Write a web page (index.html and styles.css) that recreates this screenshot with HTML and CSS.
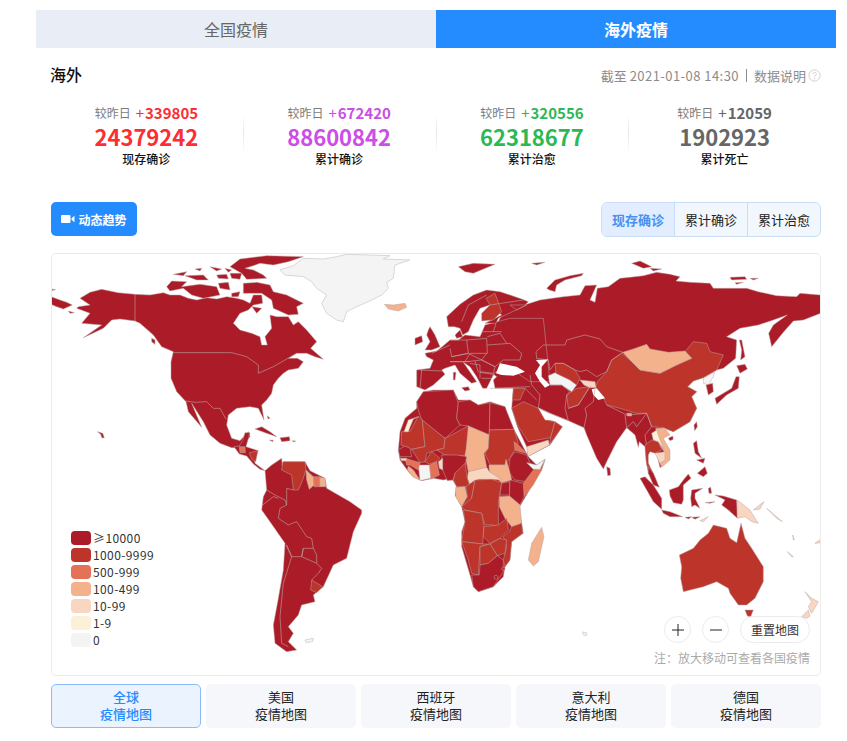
FILE: index.html
```html
<!DOCTYPE html>
<html lang="zh">
<head>
<meta charset="utf-8">
<title>海外疫情</title>
<link rel="stylesheet" href="styles.css">
</head>
<body>
<main class="page">
  <nav class="tabs">
    <div class="tab">全国疫情</div>
    <div class="tab tab-on">海外疫情</div>
  </nav>
  <section class="body">
    <header class="head">
      <h1 class="title">海外</h1>
      <div class="meta"><span class="when">截至 <span class="date">2021-01-08 14:30</span></span><span class="sep"></span><span>数据说明</span><svg class="help" viewBox="0 0 14 14" width="13" height="13"><circle cx="7" cy="7" r="6" fill="none" stroke="#ccc"/><path d="M5.3 5.5a1.8 1.8 0 1 1 2.6 1.6c-.6.3-.9.7-.9 1.4" fill="none" stroke="#ccc"/><circle cx="7" cy="10.3" r=".7" fill="#ccc"/></svg></div>
    </header>
    <div class="stats">
      <div class="stat red"><div class="delta"><span class="cmp">较昨日</span><b><i>+</i>339805</b></div><div class="num">24379242</div><div class="lab">现存确诊</div></div>
      <div class="stat purple"><div class="delta"><span class="cmp">较昨日</span><b><i>+</i>672420</b></div><div class="num">88600842</div><div class="lab">累计确诊</div></div>
      <div class="stat green"><div class="delta"><span class="cmp">较昨日</span><b><i>+</i>320556</b></div><div class="num">62318677</div><div class="lab">累计治愈</div></div>
      <div class="stat grey"><div class="delta"><span class="cmp">较昨日</span><b><i>+</i>12059</b></div><div class="num">1902923</div><div class="lab">累计死亡</div></div>
    </div>
    <div class="bar">
      <button class="trend"><svg viewBox="0 0 14 10" width="14" height="10"><rect x="0" y="1" width="9.5" height="8" rx="1" fill="#fff"/><path d="M10.5 4.2 13.5 1.8v6.4L10.5 5.8z" fill="#fff"/></svg>动态趋势</button>
      <div class="seg"><span class="seg-i seg-on">现存确诊</span><span class="seg-i">累计确诊</span><span class="seg-i">累计治愈</span></div>
    </div>
    <div class="card">
      <svg class="map" viewBox="52 254 768 421" width="768" height="421">
        <!-- north america -->
        <g transform="translate(40 245) scale(.33333)">
          <polygon class="c7 gl" points="720,75 760,62 790,40 850,42 890,35 920,28 985,30 1050,32 1030,42 1110,45 1065,60 1060,100 1040,112 1045,130 1025,150 985,170 950,185 920,200 910,230 890,225 860,205 845,175 860,150 830,130 815,110 790,95 735,90"/>
          <polygon class="c4" points="1033,178 1060,180 1095,175 1100,187 1075,198 1045,192"/>
          <polygon class="c1" points="33,155 60,165 80,172 97,180 70,192 50,185 33,178"/>
          <polygon class="c1" points="33,132 47,134 33,137"/>
          <polygon class="c1" points="85,198 103,203 90,205"/>
          <polygon class="c1" points="115,185 150,180 120,160 150,142 185,133 235,143 285,148 330,150 370,143 390,150 420,150 445,160 470,165 500,158 530,162 560,155 590,160 610,165 630,175 640,150 665,150 668,175 640,180 625,195 600,205 580,235 600,255 635,265 660,275 665,300 682,300 675,275 695,250 690,210 710,215 745,215 760,240 775,230 800,255 830,290 812,310 850,343 825,335 800,325 770,325 745,340 772,340 790,350 775,370 745,375 730,385 715,400 700,420 695,445 680,465 665,480 672,525 655,490 630,485 590,490 565,510 560,540 575,580 600,587 625,560 630,575 610,600 585,608 575,608 540,595 510,570 490,530 455,475 485,547 445,500 438,470 410,440 393,400 393,350 400,320 365,305 340,270 300,235 285,228 240,222 215,225 190,250 130,278 185,240 125,235 150,205 110,190"/>
          <polygon class="c1" points="600,42 680,32 790,35 745,50 700,60 660,55 640,62 615,70 640,75 670,90 680,100 620,103 605,85 570,65"/>
          <polygon class="c1" points="400,88 440,80 430,92"/>
          <polygon class="c1" points="435,92 490,90 505,105 470,105"/>
          <polygon class="c1" points="465,72 485,70 480,78"/>
          <polygon class="c1" points="510,65 545,72 530,78"/>
          <polygon class="c1" points="555,70 575,75 565,82"/>
          <polygon class="c1" points="530,90 560,88 565,102 535,100"/>
          <polygon class="c1" points="570,85 605,85 600,103 575,100"/>
          <polygon class="c1" points="380,125 395,108 440,110 425,125 480,118 530,125 540,150 490,160 455,150 430,130 390,138"/>
          <polygon class="c1" points="535,115 565,112 570,135 540,130"/>
          <polygon class="c1" points="575,145 600,140 595,155 575,155"/>
          <polygon class="c1" points="610,115 650,112 690,120 700,140 740,150 790,175 770,185 775,208 745,210 700,190 695,165 665,145 610,145"/>
          <polygon class="c1" points="636,185 665,190 650,205"/>
          <polygon class="c1" points="335,280 345,285 345,298 335,290"/>
          <polygon class="c1" points="172,560 188,565 193,578 186,579 182,568"/>
          <polygon class="c1" points="645,552 665,545 690,560 710,575 680,565"/>
          <polygon class="c1" points="720,578 748,575 750,587 725,590"/>
          <polygon class="c1" points="688,585 700,586 698,590"/>
          <polygon class="c1" points="757,587 767,588 760,591"/>
          <polygon class="c1" points="682,512 690,520 684,522"/>
          <path class="bd" d="M285 148V228M400 323H575L620 335 655 360V385L700 365 735 345 770 325M438 468 465 472 500 470 520 490 540 490 558 522"/>
        </g>
        <!-- central and south america -->
        <g transform="translate(210 430) scale(.33333)">
          <polygon class="c1" points="72,50 88,48 98,32 105,8 120,8 108,50 145,62 132,80 135,100 155,115 165,122 150,118 130,102 110,78 88,72"/>
          <polygon class="c3" points="88,50 105,50 106,68 90,68"/>
          <polygon class="c2" points="118,68 144,62 137,95 125,88"/>
          <polygon class="c1" points="165,122 185,105 215,85 217,108 222,95 285,95 300,122 345,145 350,175 385,195 420,215 455,240 455,250 430,305 410,385 370,405 340,470 310,495 315,515 275,525 265,555 235,590 250,610 235,635 260,660 230,665 195,640 190,585 205,505 220,420 225,340 180,275 155,240 160,200 170,180"/>
          <polygon class="c2" points="218,95 285,95 288,120 278,150 265,180 250,180 245,135 215,120"/>
          <polygon class="c4" points="288,120 310,140 312,165 298,178 290,150"/>
          <polygon class="c3" points="310,140 330,140 330,170 312,170"/>
          <polygon class="c4" points="330,142 345,145 348,170 330,170"/>
          <polygon class="c2" points="305,450 338,470 320,488 302,480"/>
          <polygon class="c7 gl" points="285,630 310,625 308,635 288,638"/>
          <path class="bd" d="M170 180 195 195 225 210 230 225 210 235 205 265 235 285 260 275 290 320 305 325 310 355 280 355 275 380 245 380 228 345M250 180 230 175 230 225M158 225 190 200 205 205M280 355 275 380 320 400 335 415 325 430 305 450M310 355 320 375 320 400M230 345 245 380 220 460 210 560 215 640 235 650"/>
        </g>
        <!-- asia base -->
        <g transform="translate(430 245) scale(.33333)">
          <polygon class="c1" points="210,220 240,185 235,175 260,175 290,178 330,165 400,155 450,150 465,122 500,120 480,165 495,172 502,130 535,125 570,100 600,97 640,92 680,82 720,88 750,95 738,108 780,112 840,115 850,130 880,130 950,130 985,140 1040,152 1100,155 1110,145 1172,150 1172,205 1120,225 1090,228 1060,262 1025,305 1016,265 1030,240 1072,210 1030,225 985,240 930,250 890,275 920,285 917,340 880,370 860,375 820,398 790,408 773,425 800,440 785,455 800,490 780,530 730,560 700,548 680,560 705,600 718,640 690,668 680,625 660,605 650,640 662,680 650,660 645,605 628,590 625,607 615,570 590,548 585,555 560,590 530,650 520,672 500,640 470,570 462,548 415,527 360,505 325,488 345,520 375,530 397,545 360,600 293,635 292,610 262,545 245,490 250,430 195,430 190,405 200,395 180,380 170,300"/>
        </g>
        <!-- europe -->
        <g transform="translate(410 285) scale(.33333)">
          <polygon class="c1" points="45,205 80,198 100,182 120,165 145,165 165,150 210,155 225,120 300,100 400,100 420,290 360,290 300,250 255,262 245,280 230,310 218,310 200,275 180,245 160,232 200,290 185,295 150,265 135,240 105,250 95,255 105,268 70,300 45,315 20,305 20,255 60,250 70,225 50,215"/>
          <polygon class="c1" points="110,95 150,58 190,30 230,15 270,20 335,42 355,50 345,60 300,60 320,75 350,60 265,100 258,115 225,115 275,90 240,60 210,70 190,105 175,140 158,150 150,130 133,125 115,125"/>
          <polygon class="c2" points="228,40 255,25 275,80 250,105 215,108 215,85 240,60"/>
          <polygon class="c1" points="55,135 60,125 75,150 90,185 65,195 45,195 60,170 50,150"/>
          <polygon class="c1" points="15,160 35,152 38,170 15,180"/>
          <polygon class="c1" points="135,150 150,135 158,155 140,160"/>
          <polygon class="c1" points="130,262 138,262 135,285 130,285"/>
          <polygon class="c1" points="155,308 175,305 180,315 165,318"/>
          <path class="bd" d="M30 255 95 258M35 255 30 310M120 165 170 165 175 205 125 215 120 190M170 165 230 160 232 205 180 205M120 230 180 230M125 215 175 205 215 225 170 230 120 230M232 180 300 175 335 205 330 225 280 225 255 245 215 225 230 205M232 155 270 145 290 175M215 140 275 140M215 225 255 245 250 265 210 260M210 262 250 268 245 280 215 280M180 235 210 240 210 280M155 110 175 60 230 30M258 115 250 140M65 205 120 180M180 205 165 230M195 228 205 262"/>
        </g>
        <!-- asia detail -->
        <g transform="translate(430 245) scale(.33333)">
          <polygon class="w" points="198,385 210,355 260,365 285,380 250,392 215,390"/>
          <polygon class="w" points="318,345 355,343 335,365 335,395 360,420 345,428 330,410 315,385 330,360"/>
          <polygon class="c1" points="85,65 130,55 195,58 170,68 130,85 105,80"/>
          <polygon class="c1" points="305,55 345,52 320,60"/>
          <polygon class="c1" points="605,55 630,48 665,65 640,70"/>
          <polygon class="c1" points="660,70 695,72 670,78"/>
          <polygon class="c1" points="900,97 945,95 950,103 905,105"/>
          <polygon class="c1" points="960,100 985,100 970,105"/>
          <polygon class="c1" points="915,113 940,112 920,118"/>
          <polygon class="c1" points="350,130 375,105 420,92 460,85 455,92 405,105 380,120 375,140 358,135"/>
          <polygon class="c1" points="928,285 935,285 945,335 932,345 935,315"/>
          <polygon class="c1" points="920,362 945,358 952,372 930,385"/>
          <polygon class="c1" points="855,460 880,445 905,430 918,395 928,395 925,430 890,450 860,478"/>
          <polygon class="c1" points="530,665 540,670 542,690 533,692"/>
          <polygon class="c2" points="575,325 600,345 630,375 690,385 740,360 785,340 765,320 790,290 830,295 840,320 880,330 860,375 820,398 790,408 773,425 800,440 785,455 800,490 780,530 730,560 700,548 665,545 650,505 620,505 570,490 530,480 520,455 495,430 502,410 530,380 545,345"/>
          <polygon class="c4" points="578,322 610,312 650,298 660,312 715,322 765,318 785,340 740,360 690,385 630,375 600,345"/>
          <polygon class="c7" points="820,400 855,380 850,395 835,420 820,415"/>
          <polygon class="c1" points="828,420 848,415 850,440 835,450"/>
          <polygon class="w" points="325,488 350,510 375,525 385,527 345,525 335,510"/>
          <polygon class="c2" points="250,430 285,430 270,465 247,465"/>
          <polygon class="c2" points="245,490 280,470 325,490 345,525 375,530 362,578 295,590 262,540"/>
          <polygon class="c2" points="375,530 397,545 358,600 362,578"/>
          <polygon class="c5" points="293,635 290,605 355,585 358,600"/>
          <polygon class="c2" points="410,450 440,430 480,425 445,480 415,490"/>
          <polygon class="c7" points="355,392 375,383 420,405 440,420 425,440 395,420 360,420"/>
          <polygon class="c2" points="375,355 400,355 435,375 450,400 440,420 420,405 378,385"/>
          <polygon class="c5" points="450,405 495,410 498,428 480,428 462,420"/>
          <polygon class="w" points="485,433 500,430 525,460 505,465 490,450"/>
          <polygon class="c4" points="590,505 605,505 605,513 592,513"/>
          <path class="bd" d="M318 320 340 300 405 300 410 285 465 270 510 282 530 305 578 322 545 345 530 380 500 395 470 375 450 380 435 375 400 355 375 355 360 375 355 345 320 340 318 320M305 420 330 450 325 490 360 505 415 527 405 490 410 450 420 440 395 420 360 420M415 490 445 480 480 425 495 430 490 470 465 490 470 510 462 548M530 480 590 510 650 505M585 510 590 548 610 530 620 545 650 505 665 545 645 570 650 605M180 180 280 165M180 430 300 425M300 390 305 420M285 430 320 465"/>
        </g>
        <!-- africa -->
        <g transform="translate(390 390) scale(.33333)">
          <polygon class="c1" points="30,125 45,85 80,55 80,35 100,5 130,0 190,0 205,30 240,30 265,45 300,35 345,50 350,75 378,130 415,200 440,225 465,208 455,240 430,280 395,340 385,355 395,400 400,430 365,455 360,510 345,530 340,560 310,590 265,605 250,590 240,555 215,470 215,425 225,395 215,350 195,315 200,290 185,265 160,270 130,265 95,272 70,260 55,245 30,210 25,180"/>
          <polygon class="c1" points="85,60 80,35 100,5 190,0 205,40 200,85 210,105 165,145 95,90"/>
          <polygon class="c1" points="205,35 240,30 265,45 300,38 298,135 235,108 210,105 200,85"/>
          <polygon class="c1" points="300,38 345,50 372,118 298,120"/>
          <polygon class="c2" points="35,125 60,125 85,78 97,90 105,170 65,178 33,165"/>
          <polygon class="c6" points="42,125 55,90 85,80 70,88 60,112 55,125"/>
          <polygon class="c2" points="97,90 165,145 162,175 140,180 110,190 105,215 90,218 65,178 105,170"/>
          <polygon class="c2" points="165,145 235,108 240,125 228,195 200,200 165,195 140,180 162,175"/>
          <polygon class="c4" points="235,108 298,135 295,175 282,190 290,232 235,245 225,195 228,180"/>
          <polygon class="c2" points="298,120 372,118 385,160 360,205 345,225 300,225 285,190 295,175"/>
          <polygon class="c3" points="372,155 385,165 410,190 390,185 375,180"/>
          <polygon class="c1" points="375,185 410,195 420,220 445,240 410,275 375,270 355,245 360,205"/>
          <polygon class="c3" points="430,240 455,235 465,208 455,240 430,285 402,320 400,280"/>
          <polygon class="c7" points="410,218 440,225 465,208 450,238 430,238"/>
          <polygon class="c4" points="297,225 345,225 348,208 358,240 365,270 335,278 298,245"/>
          <polygon class="c5" points="235,245 290,232 298,245 335,270 305,268 265,268 240,285 232,265"/>
          <polygon class="c1" points="155,195 200,195 230,200 225,225 195,250 190,270 172,272 158,240"/>
          <polygon class="c2" points="105,215 125,185 150,205 140,215 118,222"/>
          <polygon class="c3" points="118,225 140,215 148,255 122,268"/>
          <polygon class="c5" points="145,215 158,205 158,240 148,235"/>
          <polygon class="c7" points="85,225 118,225 122,265 90,272"/>
          <polygon class="c3" points="45,205 90,218 85,240 60,225 50,225"/>
          <polygon class="c4" points="55,228 70,240 90,270 70,262 52,240"/>
          <polygon class="c1" points="25,180 45,168 60,175 65,200 30,200"/>
          <polygon class="c5" points="30,205 50,205 48,212 35,212"/>
          <polygon class="c2" points="195,250 225,220 232,265 240,290 200,290 190,270"/>
          <polygon class="c4" points="197,292 225,290 232,320 215,350 197,320"/>
          <polygon class="c2" points="228,290 255,270 245,325 225,345 215,350 232,320"/>
          <polygon class="c2" points="255,270 305,268 335,278 325,340 325,400 330,415 310,405 285,405 275,370 225,360 215,350 245,325"/>
          <polygon class="c1" points="335,280 360,275 358,315 330,315"/>
          <polygon class="c1" points="360,270 400,280 402,320 390,345 358,318"/>
          <polygon class="c4" points="328,320 358,318 390,345 395,400 365,410 345,385 328,350"/>
          <polygon class="c2" points="220,360 275,370 282,410 278,462 215,455 225,395"/>
          <polygon class="c2" points="282,410 325,405 350,385 355,420 330,445 300,460 280,440"/>
          <polygon class="c2" points="395,400 398,430 365,455 360,510 345,530 340,510 350,470 340,440 358,425 365,410"/>
          <polygon class="c2" points="300,462 330,445 350,450 345,490 322,497"/>
          <polygon class="c2" points="215,455 278,462 300,462 270,470 265,555 245,550 235,510"/>
          <polygon class="c2" points="270,470 300,462 322,497 295,520 270,525"/>
          <polygon class="c1" points="245,555 268,555 270,525 295,520 322,497 340,510 340,545 310,590 265,605 250,590"/>
          <circle class="c1" cx="318" cy="562" r="6"/>
          <circle class="c2" cx="340" cy="536" r="5"/>
        </g>
        <!-- islands of asia and oceania -->
        <g transform="translate(620 410) scale(.33333)">
          <polygon class="c2" points="75,105 95,90 115,95 125,120 105,130 90,125 85,135 85,160 100,190 110,215 98,205 85,190 78,150"/>
          <polygon class="c4" points="107,55 135,55 150,75 130,85 150,120 150,150 125,172 115,150 135,130 120,105"/>
          <polygon class="c5" points="105,130 135,125 135,150 120,160"/>
          <polygon class="c6" points="95,70 110,60 120,90 130,115 115,95 100,90"/>
          <polygon class="c1" points="85,170 100,190 118,232 100,225 85,190"/>
          <polygon class="c1" points="60,205 75,200 100,225 125,265 125,298 100,275"/>
          <polygon class="c1" points="125,300 150,305 188,320 150,320 130,310"/>
          <polygon class="c1" points="195,322 215,320 205,327"/>
          <polygon class="c1" points="215,322 240,320 225,328"/>
          <polygon class="c5" points="240,332 265,320 250,335"/>
          <polygon class="c1" points="148,240 175,230 190,210 205,192 213,205 190,225 190,270 185,283 160,278 150,258"/>
          <polygon class="c1" points="215,240 248,235 225,250 225,265 240,295 225,285 215,290 212,265"/>
          <polygon class="c1" points="220,100 230,92 235,125 245,145 225,130"/>
          <polygon class="c1" points="232,190 255,170 262,190 250,200"/>
          <polygon class="c1" points="230,150 255,145 250,160"/>
          <polygon class="c1" points="222,45 230,35 232,50 224,62"/>
          <polygon class="c1" points="145,85 158,78 160,88 150,92"/>
          <polygon class="c1" points="265,235 272,232 275,250 267,250"/>
          <polygon class="c1" points="255,278 285,275 270,280"/>
          <polygon class="c1" points="285,255 310,258 350,270 352,325 325,300 305,285 315,270"/>
          <polygon class="c5" points="352,270 390,300 415,340 395,335 375,320 352,325"/>
          <polygon class="c5" points="400,300 425,280 432,275 420,297"/>
          <polygon class="c5" points="440,295 470,320 487,335 470,325"/>
        </g>
        <g transform="translate(430 490) scale(.33333)">
          <polygon class="c4" points="335,112 342,140 325,215 310,228 295,210 305,160"/>
          <polygon class="c2" points="748,195 790,175 810,150 835,130 850,105 890,115 900,145 920,158 933,100 945,145 965,175 1000,230 1000,275 975,325 950,345 925,345 900,310 895,295 860,275 820,290 760,305 752,265 755,230"/>
          <polygon class="c2" points="945,360 970,360 962,380 952,378"/>
          <polygon class="c5" points="1125,305 1145,325 1165,335 1145,370 1135,350 1145,335"/>
          <polygon class="c5" points="1115,380 1135,360 1140,378 1130,385"/>
          <polygon class="c5" points="1072,185 1090,200 1085,200"/>
          <polygon class="c5" points="1088,135 1093,150 1090,150"/>
          <polygon class="c5" points="1155,160 1172,148 1172,158"/>
          <polygon class="c7 gl" points="458,426 470,428 470,436 460,435"/>
        </g>
      </svg>
      <ul class="legend">
        <li class="lg"><span class="sw c1"></span>≥10000</li>
        <li class="lg"><span class="sw c2"></span>1000-9999</li>
        <li class="lg"><span class="sw c3"></span>500-999</li>
        <li class="lg"><span class="sw c4"></span>100-499</li>
        <li class="lg"><span class="sw c5"></span>10-99</li>
        <li class="lg"><span class="sw c6"></span>1-9</li>
        <li class="lg"><span class="sw c7"></span>0</li>
      </ul>
      <div class="ctrl">
        <div class="btns">
          <span class="rnd"><svg viewBox="0 0 12 12" width="12" height="12"><path d="M6 0v12M0 6h12" stroke="#222" fill="none"/></svg></span>
          <span class="rnd"><svg viewBox="0 0 12 12" width="12" height="12"><path d="M0 6h12" stroke="#222" fill="none"/></svg></span>
          <span class="reset">重置地图</span>
        </div>
        <div class="note">注：放大移动可查看各国疫情</div>
      </div>
    </div>
    <div class="regions">
      <div class="rg rg-on">全球<br>疫情地图</div>
      <div class="rg">美国<br>疫情地图</div>
      <div class="rg">西班牙<br>疫情地图</div>
      <div class="rg">意大利<br>疫情地图</div>
      <div class="rg">德国<br>疫情地图</div>
    </div>
  </section>
</main>
</body>
</html>
```

FILE: styles.css
```css
* { box-sizing: border-box; }
html, body { margin: 0; padding: 0; background: #fff; }
body { font-family: "Noto Sans CJK SC", "Noto Sans", sans-serif; color: #222; overflow: hidden; }
.page { width: 800px; margin: 10px 0 0 36px; }

.tabs { display: flex; height: 38px; }
.tab { flex: 1; display: flex; align-items: center; justify-content: center; padding-bottom: 1px; background: #e9edf5; color: #666; font-size: 16px; }
.tab-on { background: #248cff; color: #fff; font-weight: 700; }

.body { padding: 0 15px; }
.head { display: flex; justify-content: space-between; align-items: center; height: 56px; padding-bottom: 2px; }
.title { margin: 0 0 2px -1px; font-size: 16px; font-weight: 500; color: #111; }
.meta { display: flex; align-items: center; font-size: 13px; color: #8c8c8c; }
.date { letter-spacing: .45px; }
.sep { width: 1px; height: 13px; margin: 0 7px; background: #8c8c8c; }
.help { margin-left: 2px; }

.stats { display: grid; grid-template-columns: repeat(4, 1fr); height: 62px; margin-left: -1px; }
.stat { position: relative; display: flex; flex-direction: column; align-items: center; }
.stat + .stat::before { content: ""; position: absolute; left: 0; top: 9px; width: 1px; height: 41px; background: linear-gradient(#fff, #e6e6e6 50%, #fff); }
.delta { display: flex; align-items: center; gap: 5px; height: 18px; font-size: 15px; line-height: 18px; }
.delta b { font-weight: 700; }
.delta i { font-style: normal; font-weight: 400; margin-right: 1px; }
.cmp { font-size: 12px; color: #7c7c7c; }
.num { height: 28px; font-size: 22px; line-height: 28px; font-weight: 700; }
.lab { height: 16px; padding-top: 1px; font-size: 12px; line-height: 16px; font-weight: 500; color: #111; }
.red { color: #fc2e33; }
.purple { color: #cb4ee6; }
.green { color: #2cb855; }
.grey { color: #666; }

.bar { display: flex; justify-content: space-between; margin-top: 36px; height: 35px; }
.trend { display: flex; align-items: center; justify-content: center; gap: 3px; width: 86px; height: 34px; padding: 0; border: 0; border-radius: 5px; background: #248cff; color: #fff; font: 700 12px "Noto Sans CJK SC", sans-serif; }
.seg { display: flex; width: 220px; height: 35px; border: 1px solid #c9ddf7; border-radius: 6px; overflow: hidden; background: #f2f7fd; }
.seg-i { flex: 1; display: flex; align-items: center; justify-content: center; font-size: 13px; color: #222; }
.seg-i + .seg-i { border-left: 1px solid #c9ddf7; }
.seg-on { background: #e2eeff; color: #4a90f0; font-weight: 700; }

.card { position: relative; margin-top: 16px; height: 423px; border: 1px solid #ebebeb; border-radius: 5px; overflow: hidden; }
.map { display: block; }
.c1 { fill: #ac1c28; background: #ac1c28; }
.c2 { fill: #bd342b; background: #bd342b; }
.c3 { fill: #e37257; background: #e37257; }
.c4 { fill: #f3b18c; background: #f3b18c; }
.c5 { fill: #f8d6bf; background: #f8d6bf; }
.c6 { fill: #fdf0d9; background: #fdf0d9; }
.c7 { fill: #f4f4f4; background: #f4f4f4; }
.map polygon, .map circle { stroke: #bba7a5; stroke-width: 1.5; stroke-linejoin: round; }
.map .gl { stroke: #d0d0d0; stroke-width: 2.5; }
.map .w { fill: #fff; stroke: none; }
.bd { fill: none; stroke: #bba7a5; stroke-width: 1.8; stroke-linejoin: round; }

.legend { position: absolute; left: 19px; top: 275px; margin: 0; padding: 0; list-style: none; }
.lg { display: flex; align-items: center; height: 17px; font-size: 12px; letter-spacing: .4px; color: #333; }
.sw { width: 20px; height: 14px; margin-right: 2px; border-radius: 4px; }

.ctrl { position: absolute; right: 10px; bottom: 8px; display: flex; flex-direction: column; align-items: flex-end; gap: 6px; }
.btns { display: flex; gap: 11px; }
.rnd { display: flex; align-items: center; justify-content: center; width: 27px; height: 27px; border: 1px solid #ebebeb; border-radius: 50%; background: #fff; }
.reset { display: flex; align-items: center; justify-content: center; width: 70px; height: 27px; border: 1px solid #ebebeb; border-radius: 14px; background: #fff; font-size: 12px; color: #333; }
.note { font-size: 12px; line-height: 18px; color: #aaa; }

.regions { display: grid; grid-template-columns: repeat(5, 1fr); gap: 5px; margin-top: 8px; }
.rg { height: 44px; padding-top: 4px; border-radius: 5px; background: #f5f7fa; color: #222; font-size: 13px; line-height: 17px; text-align: center; }
.rg-on { padding-top: 3px; border: 1px solid #8bbcfa; background: #ebf3fe; color: #248cff; font-weight: 500; }
```
